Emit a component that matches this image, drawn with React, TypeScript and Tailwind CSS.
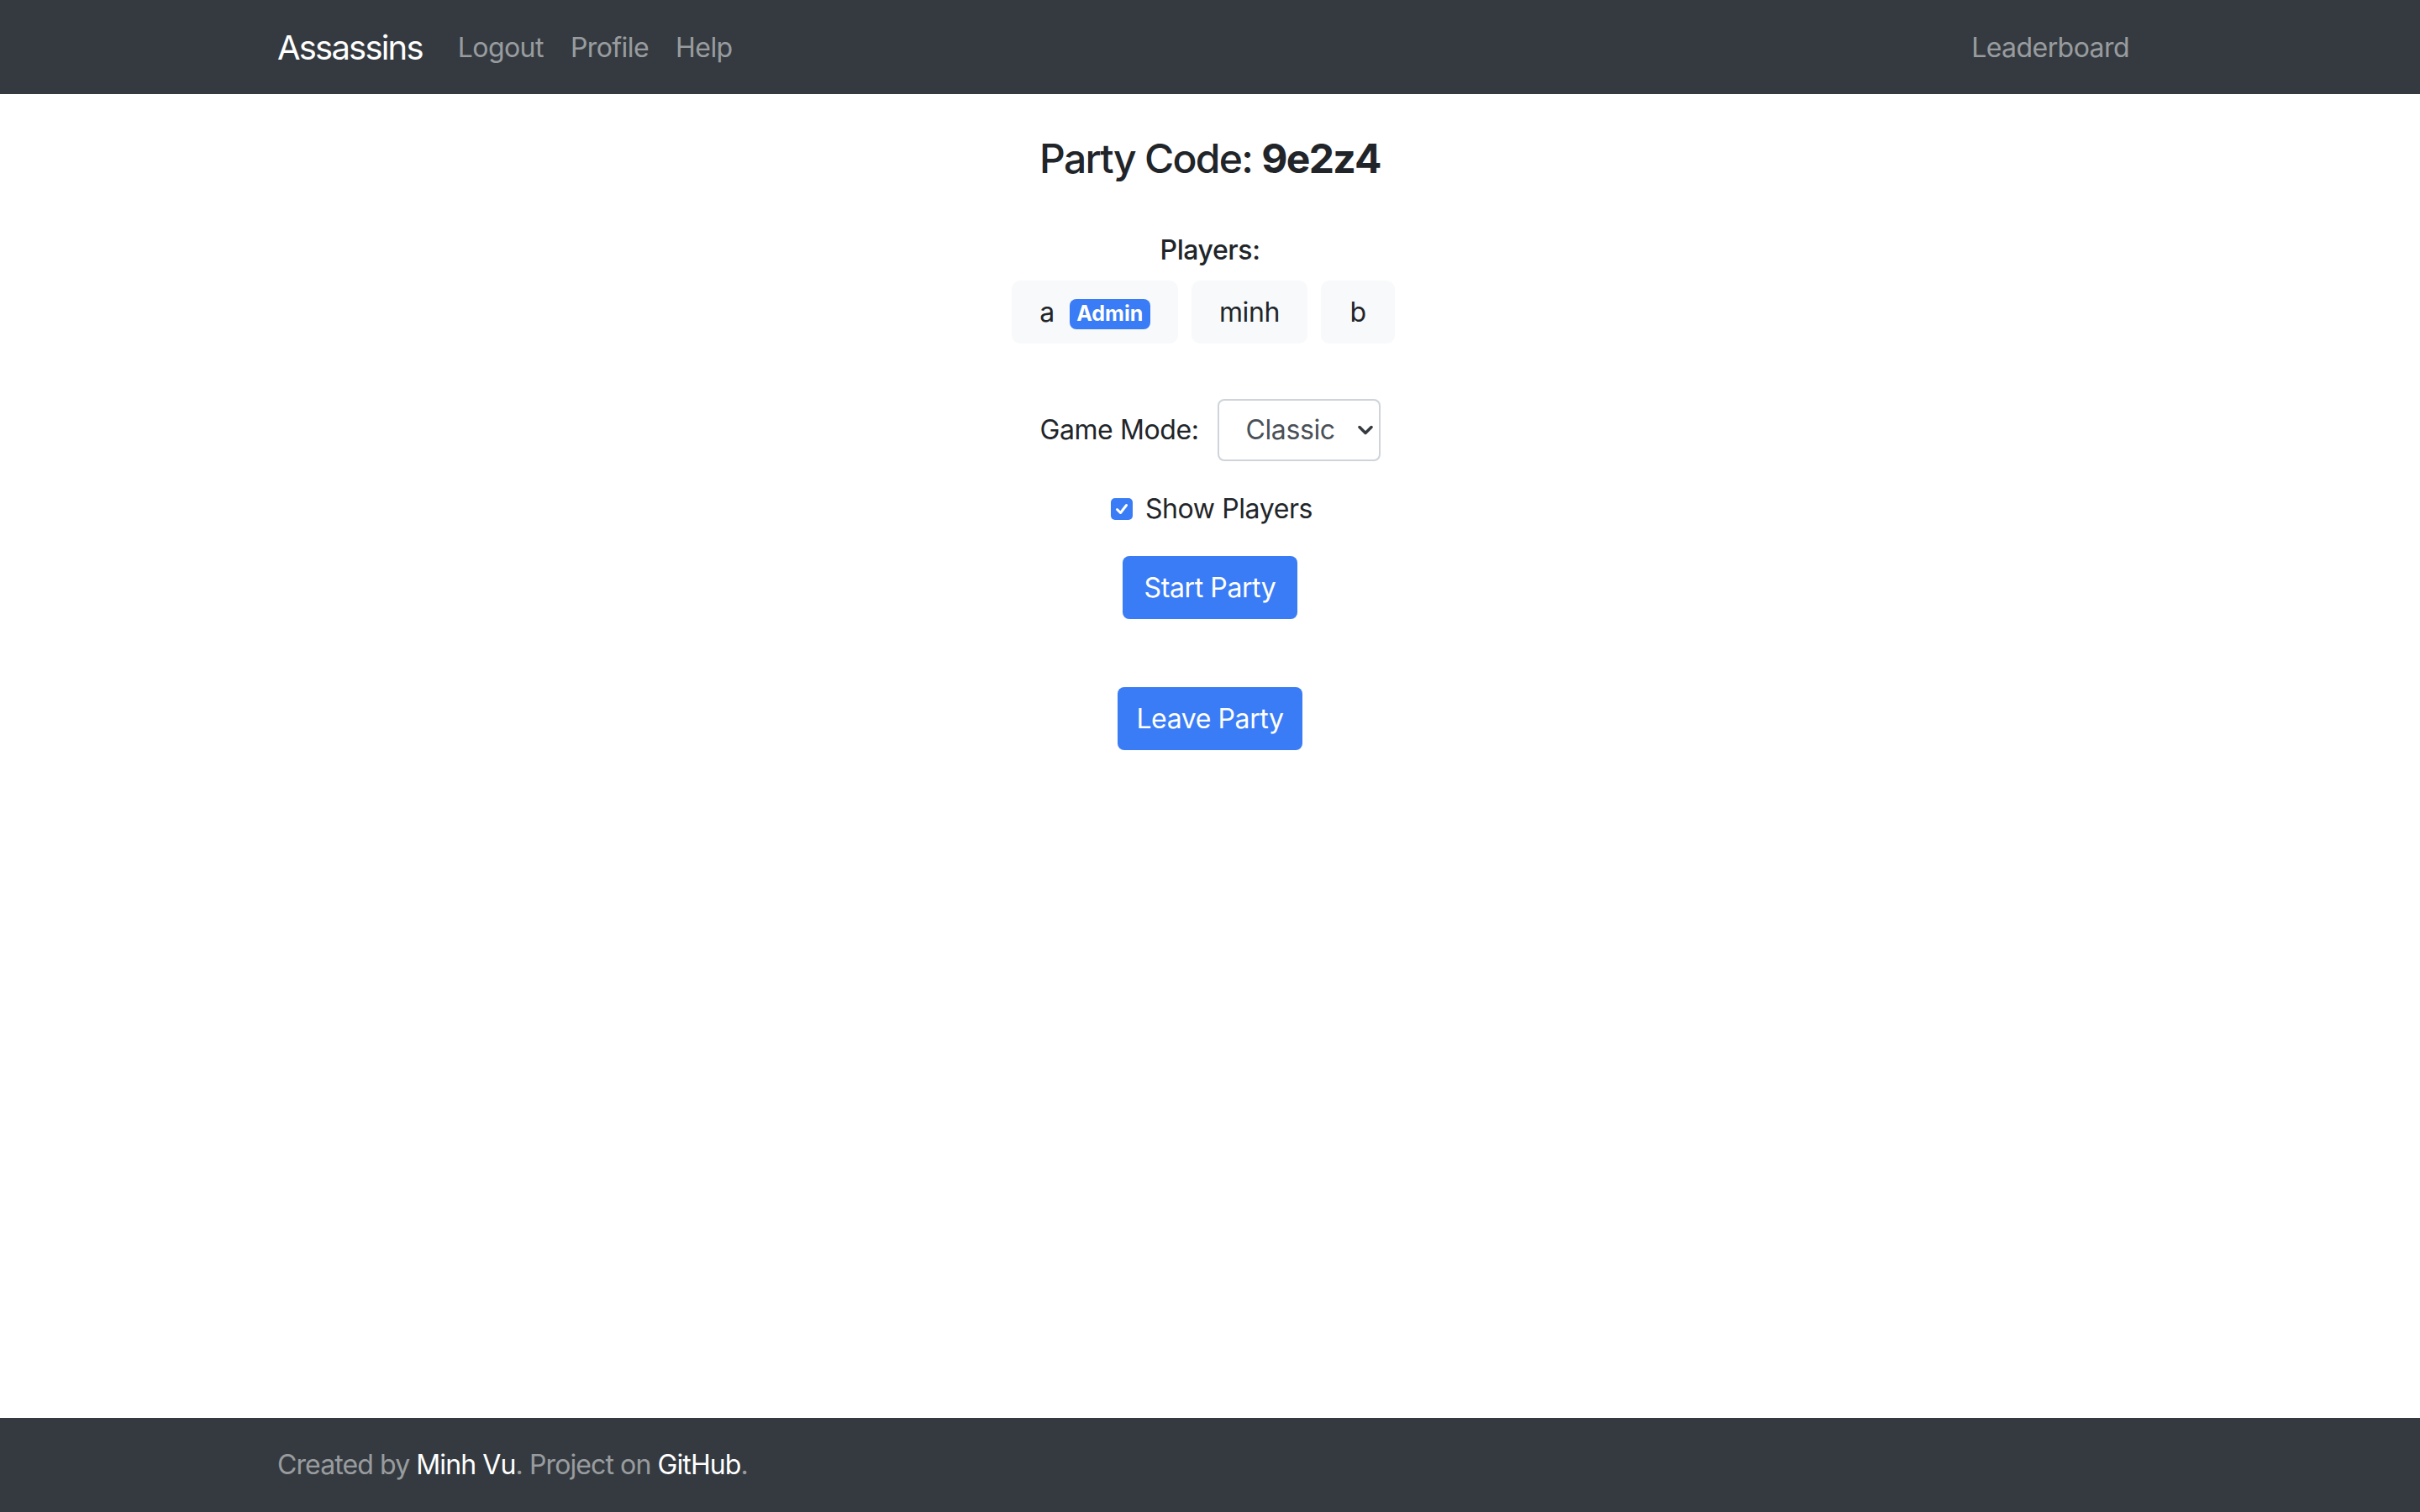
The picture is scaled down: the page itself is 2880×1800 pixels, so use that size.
import React from "react";

const font = { fontFamily: "Inter, 'Noto Sans', sans-serif" };

function Chevron() {
  return (
    <svg width="18" height="12" viewBox="0 0 18 12" className="shrink-0">
      <path d="M2 2.5 L9 9.5 L16 2.5" fill="none" stroke="#343a40" strokeWidth="3.5" strokeLinecap="round" strokeLinejoin="round" />
    </svg>
  );
}

export default function App() {
  return (
    <div className="flex h-screen flex-col bg-white tracking-[-0.025em] text-[#212529] antialiased" style={font}>
      <nav className="h-[112px] shrink-0 bg-[#343a40]">
        <div className="mx-auto flex h-full w-[2280px] items-center px-[30px] pt-[2px] tracking-[-0.035em]">
          <span className="mr-[26px] text-[40px] leading-[60px] tracking-[-0.045em] text-white">Assassins</span>
          <a className="px-[16px] text-[32px] leading-[48px] text-white/50">Logout</a>
          <a className="px-[16px] text-[32px] leading-[48px] text-white/50">Profile</a>
          <a className="px-[16px] text-[32px] leading-[48px] text-white/50">Help</a>
          <div className="flex-1" />
          <a className="px-[16px] text-[32px] leading-[48px] text-white/50">Leaderboard</a>
        </div>
      </nav>

      <main className="flex flex-1 flex-col items-center">
        <h4 className="mt-[48px] text-[48px] font-medium leading-[58px] tracking-[-0.035em]">
          Party Code: <span className="font-bold">9e2z4</span>
        </h4>

        <div className="mt-[56px] text-[32px] font-medium leading-[48px]">Players:</div>

        <div className="mt-[12px] flex">
          <div className="mr-[16px] flex h-[75px] w-[198px] items-center justify-center rounded-[10px] bg-[#f8f9fa] text-[32px]">
            <span>a</span>
            <span className="ml-[18px] mt-[5px] flex h-[36px] w-[96px] items-center justify-center rounded-[8px] bg-[#3a7cf5] text-[25px] font-bold tracking-normal text-white">
              Admin
            </span>
          </div>
          <div className="mr-[16px] flex h-[75px] w-[138px] items-center justify-center rounded-[10px] bg-[#f8f9fa] text-[32px]">
            minh
          </div>
          <div className="mr-[16px] flex h-[75px] w-[88px] items-center justify-center rounded-[10px] bg-[#f8f9fa] text-[32px]">
            b
          </div>
        </div>

        <div className="mt-[66px] flex items-center">
          <span className="text-[32px] leading-[48px]">Game Mode:</span>
          <div className="ml-[22px] flex h-[74px] w-[194px] items-center justify-between rounded-[8px] border-2 border-[#ced4da] pl-[32px] pr-[7px]">
            <span className="text-[32px] text-[#495057]">Classic</span>
            <Chevron />
          </div>
        </div>

        <div className="mt-[33px] flex items-center pl-[4px]">
          <span className="flex h-[26px] w-[26px] items-center justify-center rounded-[5px] bg-[#3a7cf5]">
            <svg width="18" height="18" viewBox="0 0 18 18">
              <path d="M3.5 9.5 L7.5 13.5 L14.5 4.5" fill="none" stroke="white" strokeWidth="3" strokeLinecap="round" strokeLinejoin="round" />
            </svg>
          </span>
          <span className="ml-[15px] text-[32px] leading-[48px]">Show Players</span>
        </div>

        <button className="mt-[32px] flex h-[75px] w-[208px] items-center justify-center rounded-[8px] bg-[#3a7cf5] text-[32px] text-white">
          Start Party
        </button>

        <button className="mt-[81px] flex h-[75px] w-[220px] items-center justify-center rounded-[8px] bg-[#3a7cf5] text-[32px] text-white">
          Leave Party
        </button>
      </main>

      <footer className="h-[112px] shrink-0 bg-[#343a40]">
        <div className="mx-auto flex h-full w-[2280px] items-center px-[30px] text-[32px] tracking-[-0.028em] text-white/50">
          <span>
            Created by <a className="text-white">Minh Vu</a>. Project on <a className="text-white">GitHub</a>.
          </span>
        </div>
      </footer>
    </div>
  );
}
